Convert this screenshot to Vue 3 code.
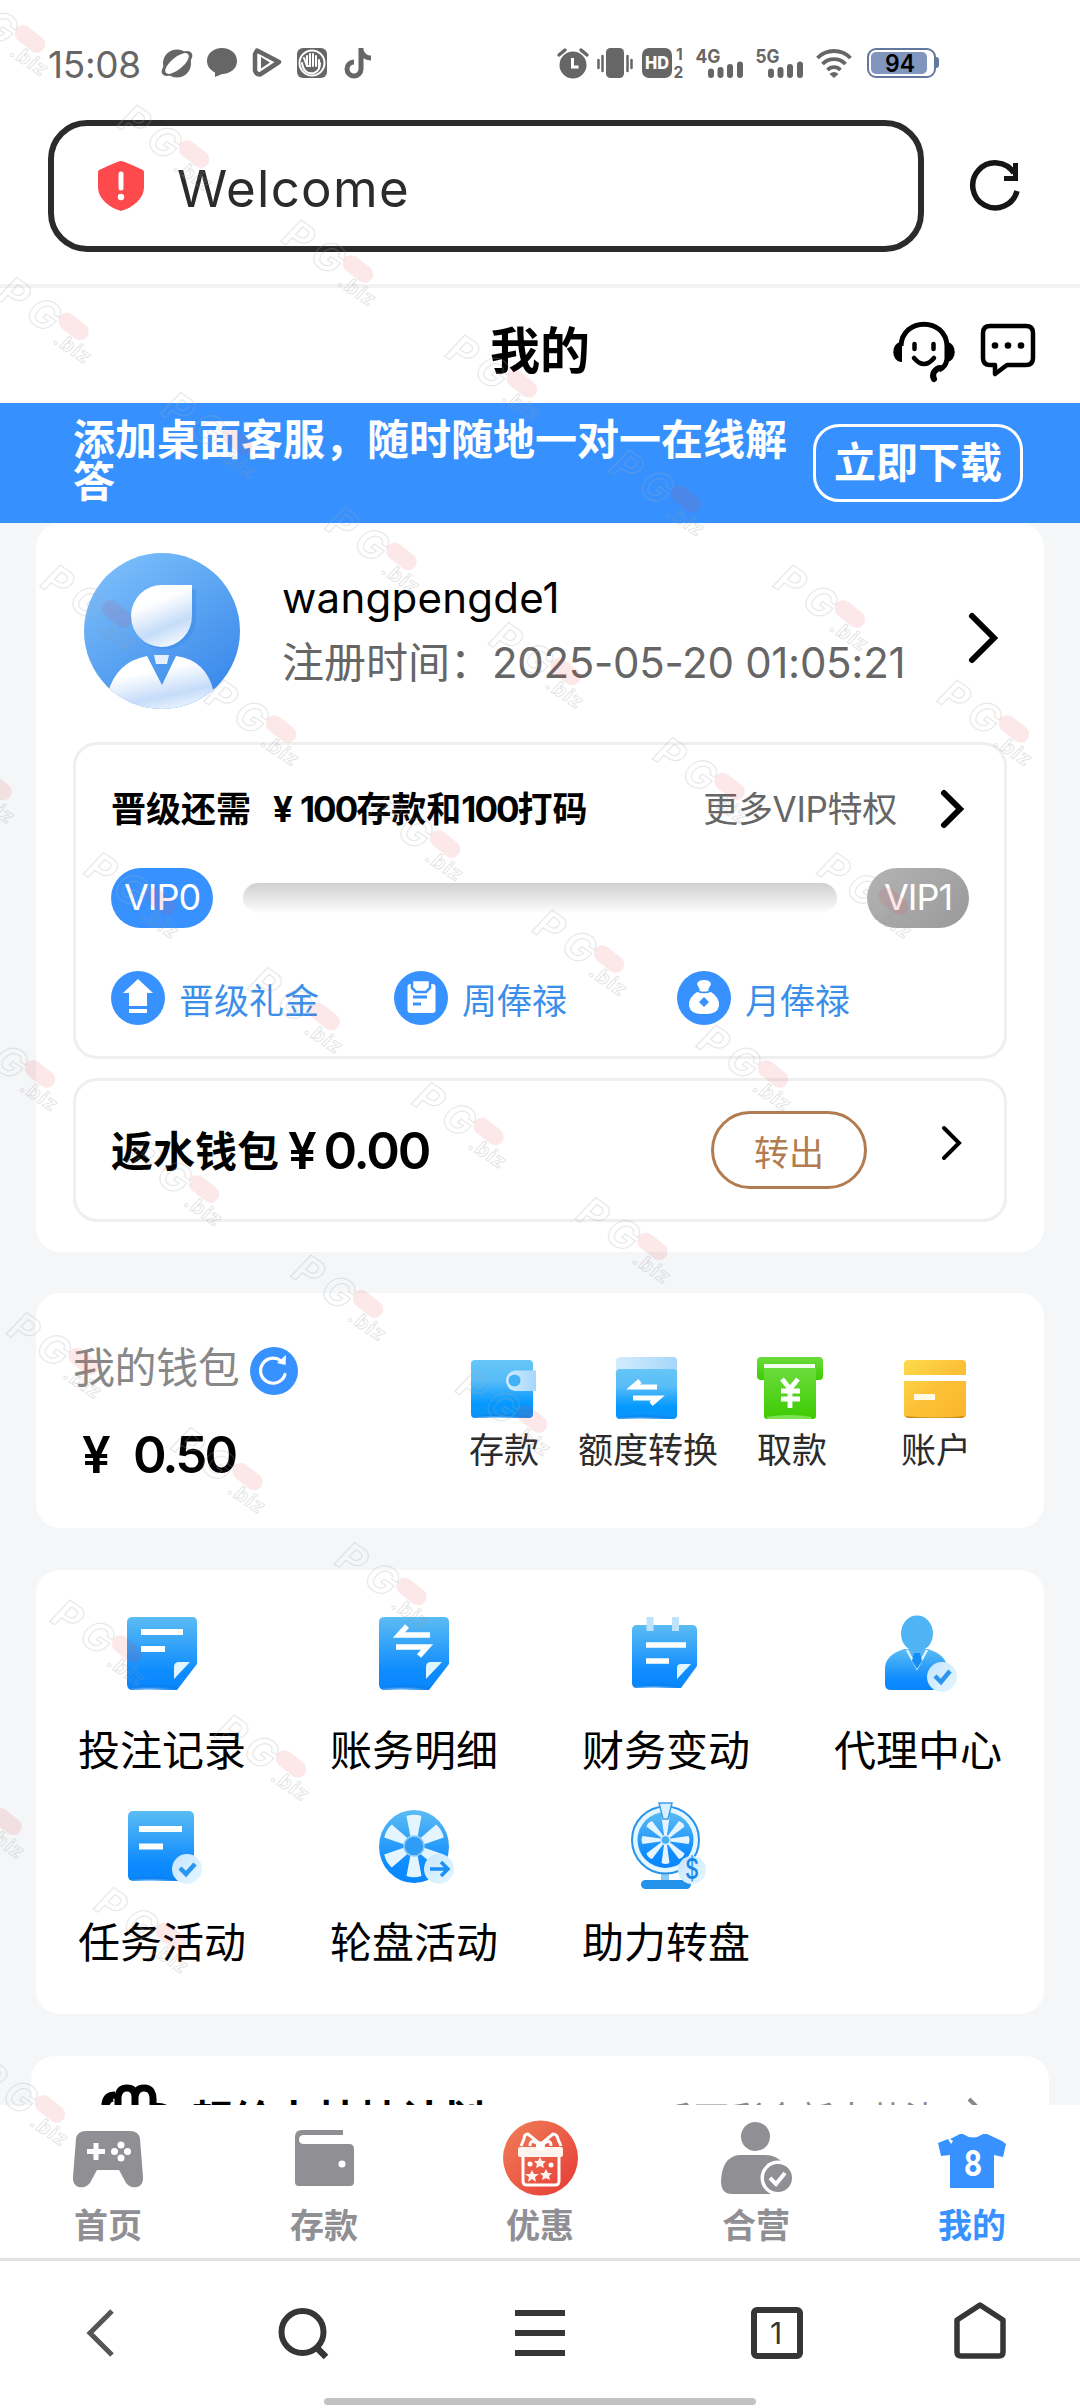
<script setup>
const perks = ['晋级礼金', '周俸禄', '月俸禄']
const wallet = ['存款', '额度转换', '取款', '账户']
const menu = ['投注记录', '账务明细', '财务变动', '代理中心', '任务活动', '轮盘活动', '助力转盘']
const tabs = ['首页', '存款', '优惠', '合营', '我的']

// Staggered watermark lattice: each row is shifted and ends one diagonal earlier
const marks = []
for (let r = 0; r < 9; r++) {
  for (let i = 0; i < 7; i++) {
    const x = 938 - r * 120.5 - i * 164
    const y = 679 + r * 172.5 - i * 115
    if (x > -110 && x < 1080 && y > -40) marks.push({ x, y })
  }
}
const spokes8 = [0, 45, 90, 135, 180, 225, 270, 315]
const spokes6 = [0, 60, 120, 180, 240, 300]
</script>

<template>
  <div class="screen">
    <svg class="defs" width="0" height="0">
      <defs>
        <linearGradient id="blue" x1="0" y1="0" x2="0" y2="1"><stop offset="0" stop-color="#5cbcf3" /><stop offset=".75" stop-color="#0d8bff" /><stop offset="1" stop-color="#0a86fb" /></linearGradient>
        <linearGradient id="blue2" x1="0" y1="0" x2="0" y2="1"><stop offset="0" stop-color="#66c6f6" /><stop offset=".35" stop-color="#58bcf8" /><stop offset=".75" stop-color="#0499ff" /><stop offset="1" stop-color="#0c93f5" /></linearGradient>
        <linearGradient id="pale" x1="0" y1="0" x2="1" y2="0"><stop offset="0" stop-color="#d3ecff" /><stop offset="1" stop-color="#a5d6fa" /></linearGradient>
        <linearGradient id="pale2" x1="0" y1="0" x2="1" y2="1"><stop offset="0" stop-color="#c5e5fd" /><stop offset="1" stop-color="#e6f7ff" /></linearGradient>
        <linearGradient id="green" x1="0" y1="0" x2="0" y2="1"><stop offset="0" stop-color="#6bdc3c" /><stop offset="1" stop-color="#3dcb02" /></linearGradient>
        <linearGradient id="gold" x1="0" y1="0" x2="1" y2="1"><stop offset="0" stop-color="#fddb4c" /><stop offset=".5" stop-color="#fcc138" /><stop offset="1" stop-color="#fbb52c" /></linearGradient>
        <linearGradient id="face" x1=".2" y1="0" x2=".6" y2="1"><stop offset=".3" stop-color="#fff" /><stop offset=".72" stop-color="#c5dcf9" /><stop offset="1" stop-color="#f2f8ff" /></linearGradient>
        <linearGradient id="ava" x1=".1" y1="0" x2=".8" y2="1"><stop offset="0" stop-color="#7fc1fb" /><stop offset="1" stop-color="#3787ea" /></linearGradient>
        <linearGradient id="red" x1="0" y1="0" x2="1" y2="1"><stop offset="0" stop-color="#f08058" /><stop offset="1" stop-color="#e63a36" /></linearGradient>
        <radialGradient id="shine" cx=".4" cy="1" r=".6"><stop offset="0" stop-color="#c8eaff" /><stop offset="1" stop-color="#0a78e4" stop-opacity="0.4" /></radialGradient>
      </defs>
    </svg>

    <header class="status">
      <span class="clock">15:08</span>
      <svg class="st-left" width="216" height="34" viewBox="160 46 216 34" fill="#666">
        <circle cx="177" cy="63.500" r="14" />
        <ellipse cx="177" cy="63.500" rx="18" ry="8" transform="rotate(-36 177 63.500)" />
        <ellipse cx="177" cy="63.500" rx="14.500" ry="6" transform="rotate(-40 177 63.500)" fill="#fff" />
        <path d="M222 48c8.500 0 15 5.500 15 13s-6.500 13-15 13l-7 3v-4.500c-5-2.500-8-6.500-8-11.500 0-7.500 6.500-13 15-13z" />
        <path d="M257 50.500l22 11.500-19 12.500q-4 0-5-4V54z" fill="none" stroke="#666" stroke-width="4.500" stroke-linejoin="round" />
        <path d="M261 57l9 5.500-9 6z" />
        <rect x="297" y="48" width="30" height="30" rx="6" />
        <circle cx="312" cy="63" r="12.500" fill="none" stroke="#fff" stroke-width="2" />
        <path d="M304 58l3 8v-10m0 10l3 0v-12m3 12v-12m3 12v-10m3 12v-8M302 63q2 12 12 10 6-2 6-10" fill="none" stroke="#fff" stroke-width="2" stroke-linecap="round" />
        <path d="M361 48v21a7 7 0 1 1-7-7M361 50q2 8 10 8" fill="none" stroke="#666" stroke-width="5" />
      </svg>
      <svg class="st-right" width="386" height="40" viewBox="556 46 386 40" fill="#666">
        <circle cx="573" cy="65" r="13.500" />
        <path d="M559 55l6-5M587 55l-6-5" stroke="#666" stroke-width="3.500" stroke-linecap="round" />
        <path d="M572.500 58v9h6" fill="none" stroke="#fff" stroke-width="3" />
        <rect x="606" y="48" width="18" height="30" rx="4.500" />
        <path d="M602.500 56v15M598.500 60v8M627.500 56v15M631.500 60v8" stroke="#666" stroke-width="2.500" stroke-linecap="round" />
        <rect x="642" y="48" width="30" height="30" rx="7" />
        <text x="645" y="68.500" class="hd" textLength="24" lengthAdjust="spacingAndGlyphs">HD</text>
        <text x="676" y="59.500" class="sub">1</text>
        <text x="673.500" y="78" class="sub">2</text>
        <text x="695.500" y="62.500" class="net" textLength="25" lengthAdjust="spacingAndGlyphs">4G</text>
        <text x="755.500" y="62.500" class="net" textLength="24" lengthAdjust="spacingAndGlyphs">5G</text>
        <path d="M711 71.500v3.500M720.500 70v5M730 67v8M740 64.500v10.500M771 71.500v3.500M780.500 70v5M790 67v8M800 64.500v10.500" stroke="#666" stroke-width="6" stroke-linecap="round" />
        <path d="M817.500 58a23 23 0 0 1 33 0M822.500 64a16 16 0 0 1 23 0M827.500 70a9 9 0 0 1 13 0" fill="none" stroke="#666" stroke-width="3.800" />
        <path d="M829.500 74q4.500-4 9 0l-4.500 4z" />
        <rect x="868" y="49" width="67" height="28" rx="8" fill="#fff" stroke="#62789c" stroke-width="2" />
        <rect x="871" y="52" width="56" height="22" rx="5" fill="#8096bd" />
        <path d="M936 57q3 0 3 3v5q0 3-3 3z" fill="#62789c" />
        <text x="885" y="71.500" class="bat" textLength="30" lengthAdjust="spacingAndGlyphs">94</text>
      </svg>
    </header>

    <section class="browser">
      <div class="url">
        <svg width="48" height="52" viewBox="0 0 48 52"><path d="M24 1q-2.500 0-22 9-1 .5-1 3v14c0 12 12 21 23 24 11-3 23-12 23-24V13q0-2.500-1-3Q26.500 1 24 1z" fill="#ff4a4d" /><path d="M24 14v14" stroke="#fff" stroke-width="5" stroke-linecap="round" /><circle cx="24" cy="37" r="3.200" fill="#fff" /></svg>
        <span>Welcome</span>
      </div>
      <svg class="reload" width="54" height="54" viewBox="0 0 54 54"><path d="M46 13A22.500 22.500 0 1 0 49 31" fill="none" stroke="#151515" stroke-width="5.500" /><path d="M50 3v18H36v-5h9V3z" fill="#151515" /></svg>
    </section>

    <section class="title">
      <h1>我的</h1>
      <div class="title-icons">
        <svg width="62" height="64" viewBox="0 0 62 64"><path d="M8 25C9-4 53-4 54 25v13q-1 8-8 11" fill="none" stroke="#000" stroke-width="5" /><path d="M8 22v18c-9-1-9-17 0-18zM54 22v18c9-1 9-17 0-18z" fill="#000" stroke="#000" stroke-width="2" /><path d="M41 58q-2-3 0-7 3-4 6-4" fill="none" stroke="#000" stroke-width="6" stroke-linecap="round" /><path d="M21.500 23v5M40.500 23v5M21 37q10 12 20 0" fill="none" stroke="#000" stroke-width="4.500" stroke-linecap="round" /></svg>
        <svg width="56" height="56" viewBox="0 0 56 56"><path d="M10 3h36q7 0 7 7v25q0 7-7 7H27L15 51v-9h-5q-7 0-7-7V10q0-7 7-7z" fill="none" stroke="#000" stroke-width="4.500" stroke-linejoin="round" /><circle cx="15" cy="22.500" r="3.300" /><circle cx="28" cy="22.500" r="3.300" /><circle cx="41" cy="22.500" r="3.300" /></svg>
      </div>
    </section>

    <section class="banner">
      <p>添加桌面客服，随时随地一对一在线解答</p>
      <button>立即下载</button>
    </section>

    <main>
      <section class="card profile">
        <div class="user">
          <svg class="avatar" width="156" height="156" viewBox="0 0 156 156">
            <clipPath id="avc"><circle cx="78" cy="78" r="78" /></clipPath>
            <circle cx="78" cy="78" r="78" fill="url(#ava)" />
            <path d="M78 36h34v31a32 32 0 0 1-62 8z" fill="#2f7ee0" opacity=".3" />
            <path d="M78 32h30v31a30.500 31 0 1 1-30-31z" fill="url(#face)" />
            <g clip-path="url(#avc)"><path d="M24 140q8-31 39-37l15 29 14-29q31 4 38 37l-20 20H40z" fill="url(#face)" /><path d="M70 102h15l-2 9H72z" fill="#e4f0fe" /></g>
          </svg>
          <div class="who"><div class="name">wangpengde1</div><div class="reg">注册时间：<span>2025-05-20 01:05:21</span></div></div>
          <svg class="go" width="34" height="54" viewBox="0 0 34 54"><path d="M5 5l22 22L5 49" fill="none" stroke="#000" stroke-width="6" stroke-linecap="round" /></svg>
        </div>

        <div class="vip">
          <div class="vip-head">
            <b>晋级还需<i class="yen">¥</i><i class="num">100</i>存款和<i class="num">100</i>打码</b>
            <span>更多VIP特权</span>
            <svg width="26" height="42" viewBox="0 0 26 42"><path d="M5 5l16 16L5 37" fill="none" stroke="#000" stroke-width="6" stroke-linecap="round" /></svg>
          </div>
          <div class="levels"><span class="lv">VIP0</span><div class="bar"></div><span class="lv off">VIP1</span></div>
          <div class="perks">
            <div v-for="(p, i) in perks" :key="p" class="perk">
              <svg width="54" height="54" viewBox="0 0 54 54">
                <circle cx="27" cy="27" r="27" fill="#3792ff" />
                <path v-if="i === 0" d="M27 8l15 14h-6v13H18V22h-6zM18 38h18v4H18z" fill="#fff" />
                <g v-else-if="i === 1"><rect x="13.500" y="13" width="28" height="29" rx="3" fill="#fff" /><path d="M18 9h18v8l-4 4H22l-4-4z" fill="#fff" stroke="#3792ff" stroke-width="2.500" /><path d="M19 26h14M19 33h8" stroke="#3792ff" stroke-width="3" /></g>
                <g v-else><path d="M20 13q1-4 7-4t7 4l-3 6q12 7 11 16-2 9-15 8-13 1-15-8-1-9 11-16z" fill="#fff" /><path d="M20 20q7 3 14 0" stroke="#3792ff" stroke-width="1.500" fill="none" /><path d="M27 26l5 5-5 5-5-5z" fill="#3792ff" /></g>
              </svg>
              <span>{{ p }}</span>
            </div>
          </div>
        </div>

        <div class="rebate">
          <b>返水钱包</b><span class="cash"><i>¥</i>0.00</span>
          <button>转出</button>
          <svg width="24" height="38" viewBox="0 0 24 38"><path d="M4 4l15 15L4 34" fill="none" stroke="#000" stroke-width="4" stroke-linecap="round" /></svg>
        </div>
      </section>

      <section class="card wallet">
        <div class="balance">
          <div class="bal-head"><span>我的钱包</span><svg width="48" height="48" viewBox="0 0 48 48"><circle cx="24" cy="24" r="24" fill="#3792ff" /><path d="M35 27.500A12.500 12.500 0 1 1 31 14" fill="none" stroke="#fff" stroke-width="3.200" stroke-linecap="round" /><path d="M36 8l-.5 10-8.500-2z" fill="#fff" /></svg></div>
          <div class="bal-num"><i>¥</i>0.50</div>
        </div>
        <div class="actions">
          <div v-for="(w, i) in wallet" :key="w" class="action">
            <svg width="72" height="64" viewBox="0 0 72 64">
              <g v-if="i === 0"><rect x="3" y="3" width="62" height="58" rx="4" fill="url(#blue2)" /><path d="M5 59q24-4 58 0l-3 2H8z" fill="url(#shine)" /><path d="M68 13.500H47a10 10.300 0 0 0 0 20.500h21z" fill="url(#pale)" /><circle cx="46.500" cy="23.500" r="6" fill="#42b2f6" /></g>
              <g v-else-if="i === 1"><rect x="4" y="0" width="61" height="30" rx="4" fill="url(#pale)" /><rect x="4" y="12" width="61" height="50" rx="4" fill="url(#blue2)" /><path d="M6 60q24-4 56 0l-3 2H9z" fill="url(#shine)" /><path d="M45 30H21l7-6M21 41h25l-7 6" fill="none" stroke="#fff" stroke-width="5" /></g>
              <g v-else-if="i === 2"><rect x="1" y="0" width="66" height="23" rx="4" fill="url(#green)" /><rect x="8" y="7" width="51" height="7" fill="#efffe9" /><path d="M8 11h52v48q0 3-3 3H11q-3 0-3-3z" fill="url(#green)" /><path d="M10 60q24-4 46 0l-2 2H12z" fill="#a9f08a" opacity=".6" /><path d="M26 22l8 10 8-10M25 34h19M25 42h19M34 32v19" fill="none" stroke="#fff" stroke-width="4.800" /></g>
              <g v-else><path d="M8 3h54q4 0 4 4v11H4V7q0-4 4-4zM4 24h62v33q0 4-4 4H8q-4 0-4-4z" fill="url(#gold)" /><path d="M5 59q30 3 60 0l-3 2H8z" fill="#c98c1c" /><rect x="14" y="37" width="21" height="6" fill="#fffbe6" /></g>
            </svg>
            <span>{{ w }}</span>
          </div>
        </div>
      </section>

      <section class="card menu">
        <div v-for="(m, i) in menu" :key="m" class="cell">
          <svg width="80" height="92" viewBox="-1 0 80 92">
            <g v-if="i === 0 || i === 1">
              <path d="M10 10h59q5 0 5 5v42L54 83H10q-6 0-6-6V15q0-5 6-5z" fill="url(#blue)" /><path d="M6 80q25-5 50 0l-3 3H10z" fill="url(#shine)" /><path d="M51 60q0-5 5-5h11L51 72z" fill="#e0f6ff" />
              <path v-if="i === 0" d="M18 25h42M18 42h24" stroke="#fff" stroke-width="6" />
              <path v-else d="M55 28H24l8-9M21 40h31l-8 9" fill="none" stroke="#fff" stroke-width="5.500" />
            </g>
            <g v-else-if="i === 2"><path d="M10 18h55q5 0 5 5v36L54 81H10q-5 0-5-5V23q0-5 5-5z" fill="url(#blue)" /><path d="M7 79q25-5 48 0l-3 2H10z" fill="url(#shine)" /><path d="M23 10v14M48.500 10v14" stroke="#bde2f9" stroke-width="7" /><path d="M19 38h40M19 54h23" stroke="#fff" stroke-width="5.500" /><path d="M50 61q0-4 4-4h10L50 72z" fill="#e0f6ff" /></g>
            <g v-else-if="i === 3" transform="translate(2 0)"><path d="M4 77V62q0-14 19-20h24q19 6 19 20v21H10q-6 0-6-6z" fill="url(#blue)" /><path d="M26 43l10 18 10-18M36 46v14" fill="none" stroke="#dff4ff" stroke-width="2.500" /><path d="M33 46h6l2 8-5 8-5-8z" fill="#168cf5" /><ellipse cx="36" cy="26.500" rx="16" ry="18" fill="#4eb4f3" /><circle cx="61" cy="70" r="15" fill="url(#pale2)" /><path d="M54 69l6 6 9-11" fill="none" stroke="#2b96ef" stroke-width="4.500" /></g>
            <g v-else-if="i === 4"><rect x="5" y="12" width="66" height="70" rx="5" fill="url(#blue)" /><path d="M7 80q25-5 50 0l-3 2H10z" fill="url(#shine)" /><path d="M16 30h43M16 47.500h24" stroke="#fff" stroke-width="6" /><circle cx="64" cy="70" r="15" fill="url(#pale2)" /><path d="M57 69l6 6 9-10" fill="none" stroke="#2b96ef" stroke-width="4.500" /></g>
            <g v-else-if="i === 5"><ellipse cx="39" cy="47.500" rx="35" ry="36.500" fill="url(#blue)" /><path v-for="s in spokes6" :key="s" d="M31.500 17q7.500-2.500 15 0L42.500 38h-7z" fill="#e4f5ff" :transform="`rotate(${s} 39 47)`" /><circle cx="39" cy="47" r="10" fill="#2f9df6" stroke="#8fcdf9" stroke-width="1.500" /><circle cx="64" cy="70" r="15" fill="url(#pale2)" /><path d="M55 70h17m-6-7l7 7-7 7" fill="none" stroke="#1b90f5" stroke-width="3.500" /></g>
            <g v-else><path d="M34 72h8v12h-8z" fill="#8bcaf4" /><rect x="14" y="81" width="50" height="9" rx="4.500" fill="#2492e8" /><ellipse cx="38.500" cy="41" rx="33.500" ry="33.500" fill="#e4f6ff" stroke="#2993ea" stroke-width="2" /><ellipse cx="38.500" cy="41" rx="28" ry="28" fill="url(#blue)" /><path v-for="s in spokes8" :key="s" d="M34.500 18q4-2 8 0L40 36h-3z" fill="#e4f5ff" :transform="`rotate(${s} 38.500 41)`" /><circle cx="38.500" cy="41" r="4.500" fill="#4bacf2" stroke="#d8f0ff" stroke-width="1.500" /><path d="M32 4h13l-4 16h-5z" fill="#d9f1ff" stroke="#3c9fea" stroke-width="1.500" /><circle cx="65" cy="71" r="14" fill="url(#pale2)" /><text x="65" y="80" text-anchor="middle" class="dollar" textLength="14" lengthAdjust="spacingAndGlyphs">$</text></g>
          </svg>
          <span>{{ m }}</span>
        </div>
      </section>

      <section class="card plan">
        <svg width="80" height="40" viewBox="-2 0 80 40"><path d="M4 40V24q1-9 10-9M17 40V17q1-9 9-9 8 0 8 9v23M34 40V17q1-9 9-9 10 0 9 14v18M4 30q1-11 8-12" fill="none" stroke="#000" stroke-width="7" /><path d="M50 23q20-2 25 12v5H50z" /></svg>
        <b>超给力扶持计划</b>
        <span>千万彩金新人共沾</span>
        <svg class="mini" width="24" height="38" viewBox="0 0 24 38"><path d="M4 4l15 15L4 34" fill="none" stroke="#888" stroke-width="4" /></svg>
      </section>
    </main>

    <nav class="tabs">
      <div v-for="(t, i) in tabs" :key="t" class="tab" :class="{ on: i === 4 }">
        <svg width="80" height="80" viewBox="0 0 80 80" fill="#8f8f94">
          <g v-if="i === 0"><path d="M18 12h44q9 0 10 8l3 38c1 13-14 13-18 4l-6-11H29l-6 11c-4 9-19 9-18-4l3-38q1-8 10-8z" /><path d="M28 24v17M19 32.500h18" stroke="#fff" stroke-width="5" /><g fill="#fff"><circle cx="53" cy="26" r="3.500" /><circle cx="53" cy="39" r="3.500" /><circle cx="46.500" cy="32.500" r="3.500" /><circle cx="59.500" cy="32.500" r="3.500" /></g></g>
          <g v-else-if="i === 1"><path d="M18 11h41v5H20q-5 0-5 4.500t5 4.500h45q5 0 5 5v33q0 4-4 4H15q-4 0-4-4V18q0-7 7-7z" /><circle cx="58" cy="45" r="3.500" fill="#fff" /></g>
          <g v-else-if="i === 2"><circle cx="40.500" cy="39" r="37.500" fill="url(#red)" /><g fill="none" stroke="#fff" stroke-width="3"><path d="M40 25L28 15q-4 0-4 5l-3 7M41 25l12-10q4 0 5 5l3 7M30 27q0-8 8-2M51 27q0-8-8-2" /><path d="M23 38v24q0 4 4 4h28q4 0 4-4V38" /></g><rect x="18" y="28" width="45" height="10" rx="2" fill="#fff3ee" /><circle cx="40.500" cy="27" r="4.500" fill="#fff" /><path d="M40 38l2 4 4 0-3 3 1 4-4-2-4 2 1-4-3-3 4 0zM32 51l2 4h5l-4 3 1 5-4-3-4 3 1-5-4-3h5zM46 50l2 4h4l-3 3 1 4-4-2-4 2 1-4-3-3h4z" fill="#fff3ee" /><circle cx="30" cy="45" r="2.500" fill="#fff" /><circle cx="51" cy="46" r="2.500" fill="#fff" /></g>
          <g v-else-if="i === 3"><circle cx="39.500" cy="17.500" r="14.500" /><path d="M23 36h26q12 0 17 8v31H16Q5 75 5 62 6 38 23 36z" /><circle cx="62" cy="59" r="17.500" fill="#fff" /><circle cx="62" cy="59" r="14" /><path d="M54 59l6 6 9-11" fill="none" stroke="#fff" stroke-width="4" /></g>
          <g v-else><path d="M18 20l10-5 3 0q10 7 20 0l4 0 15 7 4 3-3 13-9-2v33H18V36L9 37 6 24l10-4 3 5 2-3z" fill="#3792ff" /><text x="41" y="57" text-anchor="middle" class="eight" textLength="18" lengthAdjust="spacingAndGlyphs">8</text></g>
        </svg>
        <span>{{ t }}</span>
      </div>
    </nav>

    <footer class="nav">
      <div class="nav-row">
        <svg width="60" height="60" viewBox="70 2303 60 60"><path d="M111 2311l-22 22 22 22" fill="none" stroke="#555" stroke-width="5" /></svg>
        <svg width="60" height="60" viewBox="272 2303 60 60"><circle cx="301.500" cy="2332" r="21" fill="none" stroke="#363636" stroke-width="6" /><path d="M315 2347l10 10" stroke="#363636" stroke-width="6.500" /></svg>
        <svg width="60" height="60" viewBox="509 2303 60 60"><path d="M514 2313h50M514 2333h50M514 2353h50" stroke="#363636" stroke-width="6" /></svg>
        <svg width="60" height="60" viewBox="746 2303 60 60"><rect x="753" y="2310" width="46" height="46" rx="3" fill="none" stroke="#363636" stroke-width="6" /><text x="775" y="2344" text-anchor="middle" class="one">1</text></svg>
        <svg width="60" height="60" viewBox="949 2303 60 60"><path d="M956 2320l23-15 23 15v32q0 4-4 4h-38q-4 0-4-4z" fill="none" stroke="#363636" stroke-width="5.500" stroke-linejoin="round" /></svg>
      </div>
      <div class="pill"></div>
    </footer>

    <svg class="marks" width="1080" height="2408" viewBox="0 0 1080 2408">
      <g v-for="(m, i) in marks" :key="i" :transform="`translate(${m.x} ${m.y})`">
        <text x="0" y="0" transform="translate(-2 22) rotate(34)" class="wm">PG</text>
        <rect x="-17" y="-8.500" width="34" height="17" rx="8.500" transform="translate(76 50) rotate(38)" fill="#e83c46" opacity=".12" />
        <text x="0" y="0" transform="translate(55 66) rotate(34)" class="wmb">.biz</text>
      </g>
    </svg>
  </div>
</template>

<style>
html, body { margin: 0; background: #fff; }
</style>

<style scoped>
.screen { position: relative; width: 1080px; height: 2408px; overflow: hidden; background: #fff; display: flex; flex-direction: column; font-family: Inter, "Noto Sans CJK SC", sans-serif; color: #000; }
.screen * { box-sizing: border-box; }
svg { display: block; flex: none; overflow: visible; }
.defs { height: 0; }
i { font-style: normal; }
button { background: none; font: inherit; padding: 0; flex: none; }
.status { height: 120px; padding: 46px 0 0 48px; display: flex; flex: none; align-items: flex-start; color: #666; }
.clock { width: 112px; font-size: 37px; line-height: 38px; white-space: nowrap; letter-spacing: -.3px; }
.st-right { margin-left: 180px; }
.hd { font: 800 17px Inter, sans-serif; fill: #fff; }
.sub { font: 700 15.500px Inter, sans-serif; }
.net { font: 700 19px Inter, sans-serif; }
.bat { font: 600 24px Inter, sans-serif; fill: #000; }
.browser { height: 168px; flex: none; padding-left: 48px; display: flex; border-bottom: 4px solid #f3f3f3; }
.url { width: 876px; height: 132px; border: 6px solid #2b2b2b; border-radius: 39px; padding-left: 43px; display: flex; align-items: center; color: #2b2b2b; font-size: 51px; }
.url span { margin-left: 32px; line-height: 60px; margin-top: 5px; letter-spacing: 1.3px; }
.url svg { margin-top: -1px; }
.reload { margin: 40px 0 0 44px; }
.title { height: 115px; flex: none; display: grid; grid-template-columns: 1fr auto 1fr; align-items: center; padding-right: 44px; }
h1 { grid-column: 2; margin: 10px -44px 0 0; font-size: 50px; font-weight: 700; line-height: 60px; }
.title-icons { grid-column: 3; justify-self: end; display: flex; gap: 25px; align-items: center; margin-top: 14px; }
.title-icons svg + svg { margin-top: -4px; }
.banner { height: 120px; flex: none; background: #3691ff; color: #fff; display: flex; padding: 0 57px 0 73px; font-size: 42px; font-weight: 700; }
.banner p { margin: 16px 24px 0 0; width: 716px; line-height: 42px; white-space: normal; }
.banner button { width: 210px; height: 78px; margin-top: 21px; border: 3px solid #fff; border-radius: 26px; color: #fff; line-height: 70px; }
main { height: 1582px; flex: none; overflow: hidden; background: #f4f6f8; display: flex; flex-direction: column; align-items: center; }
.card { width: 1008px; flex: none; background: #fff; border-radius: 24px; }
.profile { height: 729px; padding: 30px 37px 0; }
.user { height: 189px; padding: 0 6px 0 11px; display: flex; }
.who { margin-left: 42px; flex: 1; white-space: nowrap; }
.name { font-size: 42px; line-height: 50px; margin-top: 20px; letter-spacing: .25px; }
.reg { font-size: 42px; line-height: 50px; margin-top: 15px; color: #666; }
.reg span { letter-spacing: -.3px; }
.go { margin-top: 58px; margin-right: 0; }
.vip { height: 317px; border: 3px solid #efefef; border-radius: 24px; padding: 0 35px; }
.vip-head { display: flex; height: 123px; padding-top: 43px; font-size: 35px; line-height: 42px; white-space: nowrap; }
.yen { margin: 0 7px 0 22px; }
.num { letter-spacing: -2px; }
.vip-head span { margin-left: auto; color: #666; letter-spacing: -.3px; }
.vip-head svg { margin: 0 4px 0 42px; }
.levels { display: flex; align-items: center; justify-content: space-between; height: 60px; }
.lv { width: 102px; height: 60px; border-radius: 30px; background: #3792ff; color: #fff; font-size: 36px; line-height: 59px; text-align: center; letter-spacing: -1px; }
.lv.off { background: linear-gradient(135deg, #b4b4b4, #999); }
.bar { width: 594px; height: 30px; border-radius: 15px; background: linear-gradient(#d0d0d0, #fdfdfd); }
.perks { display: flex; margin-top: 43px; }
.perk { width: 283px; display: flex; align-items: center; gap: 14px; font-size: 35px; color: #3b8fea; }
.rebate { height: 144px; margin-top: 19px; border: 3px solid #efefef; border-radius: 24px; padding: 0 40px 0 35px; display: flex; align-items: center; font-size: 42px; }
.rebate b { margin-top: -4px; }
.cash { font-size: 51px; font-weight: 600; margin-left: 9px; letter-spacing: -2.2px; }
.cash i { margin-right: 9px; }
.rebate button { width: 156px; height: 78px; margin-left: auto; border: 3px solid #b27c50; border-radius: 39px; color: #b27c50; font-size: 35px; }
.rebate svg { margin: -15px 0 0 73px; }
.wallet { height: 235px; margin-top: 41px; padding-left: 37px; display: flex; }
.balance { width: 359px; }
.bal-head { display: flex; align-items: center; gap: 11px; margin-top: 54px; height: 48px; font-size: 42px; color: #888; letter-spacing: -.4px; }
.bal-head span { margin-top: -13px; }
.bal-num { margin: 29px 0 0 9px; font-size: 51px; line-height: 62px; font-weight: 600; letter-spacing: -2.8px; }
.bal-num i { margin-right: 25px; }
.actions { display: flex; padding-top: 64px; }
.action { width: 144px; display: flex; flex-direction: column; align-items: center; white-space: nowrap; font-size: 35px; line-height: 42px; color: #2c2c2c; }
.action span { margin-top: 8px; }
.menu { height: 444px; margin-top: 42px; padding-top: 37px; display: grid; grid-template-columns: repeat(4, 252px); grid-auto-rows: 192px; }
.cell { display: flex; flex-direction: column; align-items: center; font-size: 42px; line-height: 50px; }
.cell span { margin-top: 27px; }
.dollar { font: 500 28px Inter, sans-serif; fill: #1b86e8; }
.plan { width: 1018px; margin-top: 42px; height: 160px; padding: 24px 60px 0 68px; display: flex; font-size: 42px; line-height: 50px; white-space: nowrap; }
.plan b { margin: 16px 0 0 12px; }
.plan span { margin: 14px 0 0 auto; font-size: 35px; color: #888; }
.plan .mini { margin: 15px 0 0 26px; }
.tabs { height: 153px; flex: none; display: flex; background: #fff; padding-top: 14px; }
.tab { width: 216px; display: flex; flex-direction: column; align-items: center; color: #8f8f94; font-size: 34px; line-height: 42px; font-weight: 700; }
.tab span { margin-top: 6px; }
.tab.on { color: #3792ff; }
.eight { font: 700 36px Inter, sans-serif; fill: #fff; }
.nav { height: 150px; flex: none; border-top: 3px solid #e2e2e2; background: #fff; display: flex; flex-direction: column; align-items: center; }
.nav-row { width: 939px; height: 137px; padding-top: 42px; display: grid; grid-template-columns: 202px 237px 237px 203px 60px; }
.one { font: 400 30px Inter, sans-serif; fill: #363636; }
.pill { width: 432px; height: 7px; border-radius: 4px; background: #c2c2c2; }
.marks { position: absolute; left: 0; top: 0; pointer-events: none; }
.wm { font: 700 italic 40px Inter, sans-serif; fill: none; stroke: #aaa; stroke-opacity: .28; stroke-width: 1.200; letter-spacing: 8px; }
.wmb { font: 700 italic 20px Inter, sans-serif; fill: none; stroke: #999; stroke-opacity: .28; stroke-width: 1; letter-spacing: 1px; }
</style>
